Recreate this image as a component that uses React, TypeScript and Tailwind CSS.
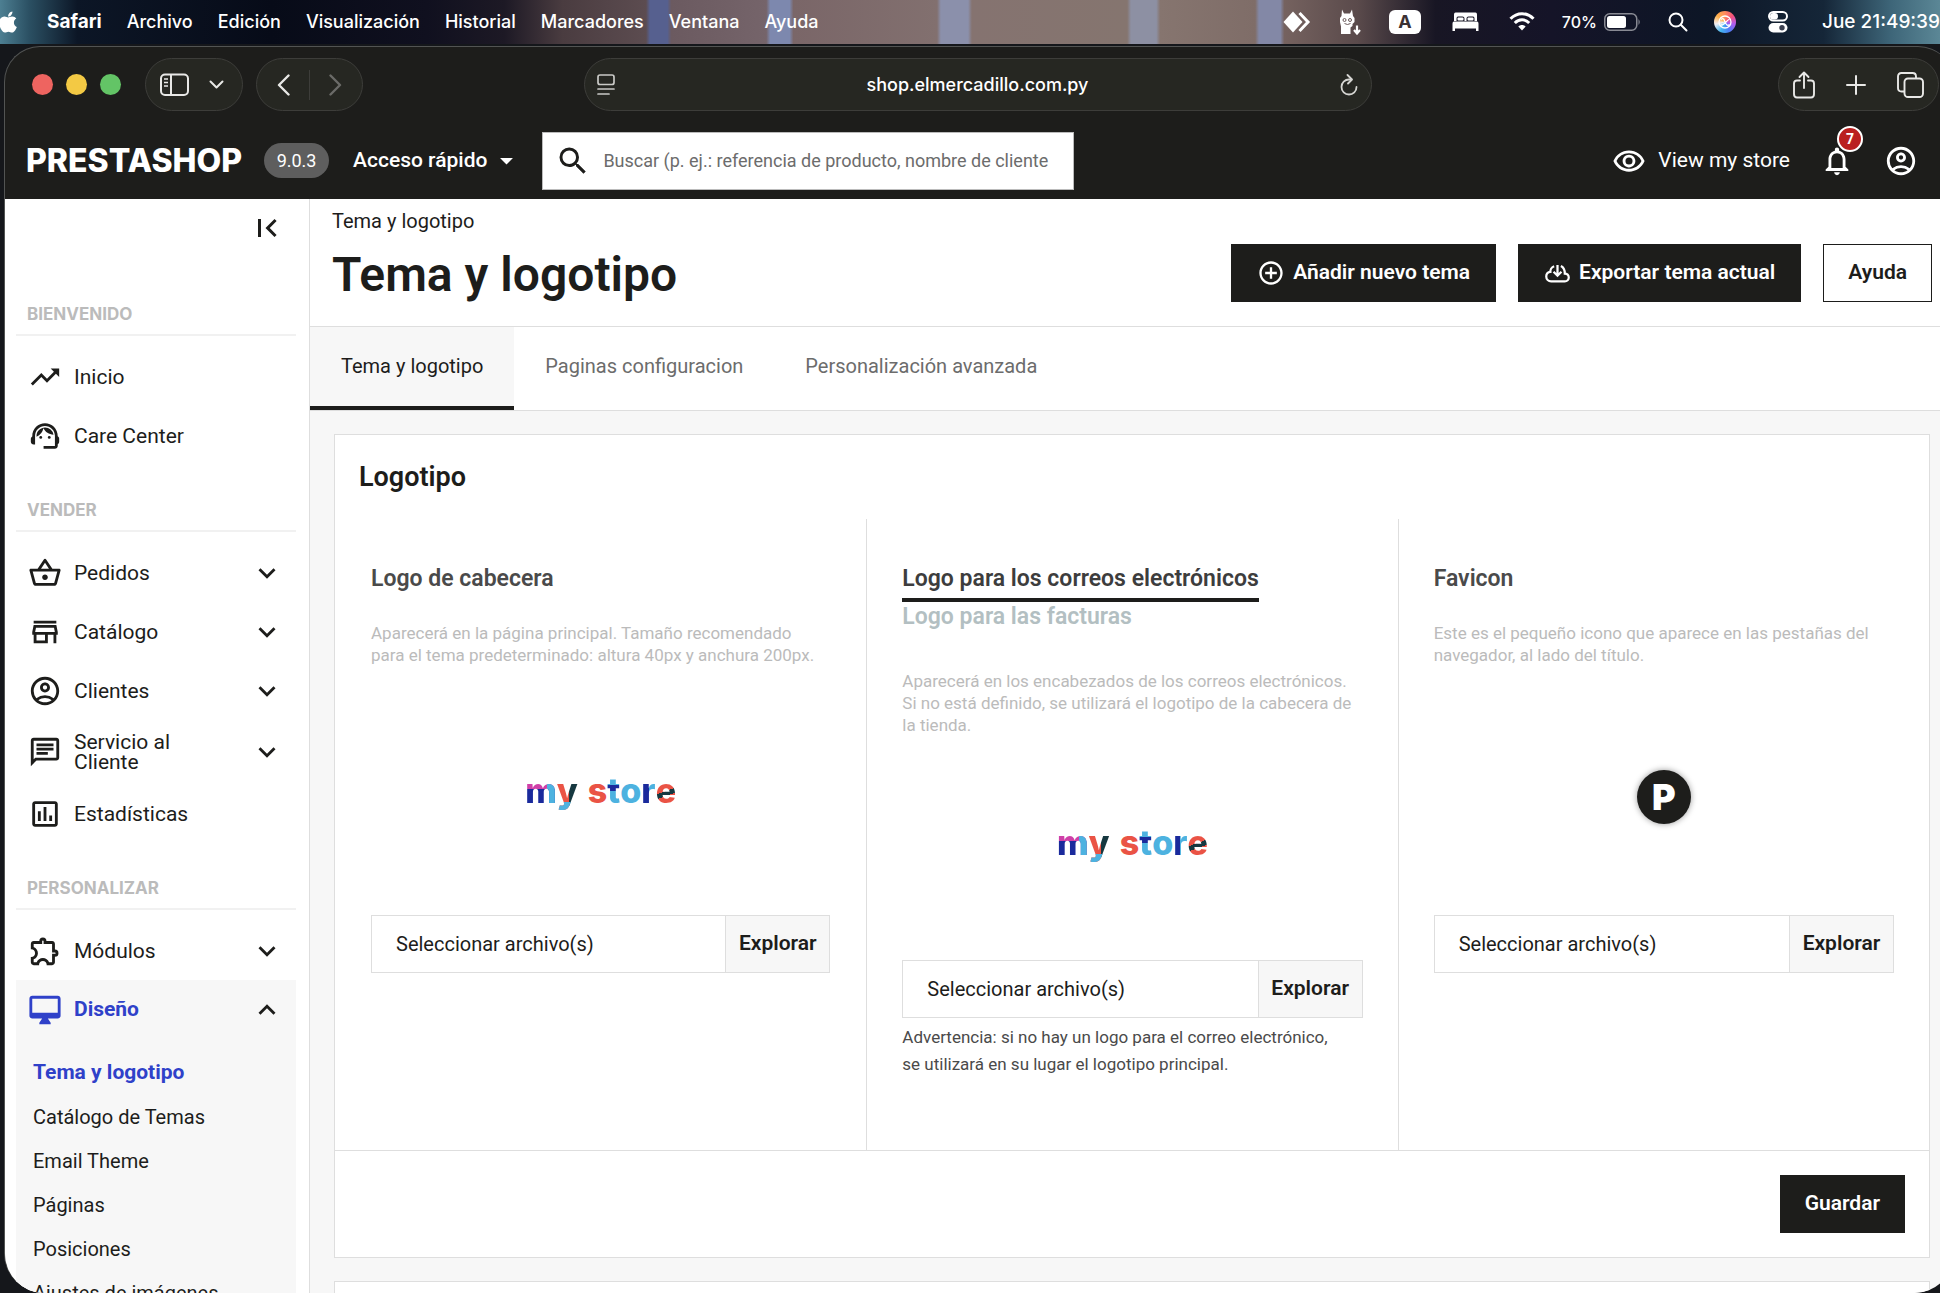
import React from 'react';
import {
  MdAddCircleOutline,
  MdArrowDropDown,
  MdExpandLess,
  MdExpandMore,
  MdFirstPage,
  MdNotificationsNone,
  MdOutlineAccountCircle,
  MdOutlineAssessment,
  MdOutlineChat,
  MdOutlineDesktopMac,
  MdOutlineExtension,
  MdOutlineRemoveRedEye,
  MdOutlineShoppingBasket,
  MdOutlineStore,
  MdSearch,
  MdSupportAgent,
  MdTrendingUp
} from 'react-icons/md';
import { FaApple } from 'react-icons/fa';

const menus = ['Archivo', 'Edición', 'Visualización', 'Historial', 'Marcadores', 'Ventana', 'Ayuda'];

const MenuBar = () => (
  <div className="flex h-11 shrink-0 items-center justify-between overflow-hidden whitespace-nowrap bg-[linear-gradient(90deg,#4d7f92_0%,#2b5063_1.5%,#0c1626_4%,#070b18_14%,#10101f_22%,#1d1925_26%,#4a3c40_29%,#5c4c50_33.3%,#56608f_33.5%,#56608f_34.4%,#6b5a60_34.6%,#75646a_39.5%,#7d88ae_39.7%,#7d88ae_40.7%,#7a6668_40.9%,#82706f_48.3%,#8b90ab_48.5%,#8b90ab_49.9%,#857370_50.1%,#85756f_58.1%,#8d90a3_58.3%,#8d90a3_59.6%,#86756f_59.8%,#7f6d68_64.7%,#8388a6_64.9%,#8388a6_66%,#75625f_66.2%,#5a4a4b_70%,#181624_74%,#151428_80%,#0d1626_88%,#152638_94%,#3e6679_97.5%,#5b8796_100%)] font-['Inter',sans-serif] text-lg text-white">
    <div className="flex items-center gap-[25px]">
      <div className="flex items-center gap-[27px]">
        <FaApple className="size-6 -ml-1" />
        <span className="text-[19px] font-bold">Safari</span>
      </div>
      {menus.map((m) => (
        <span key={m} className="font-medium">{m}</span>
      ))}
    </div>
    <div className="flex items-center">
      <svg width="28" height="24" viewBox="0 0 28 24" fill="none">
        <path d="M10 1.5L19.5 12L10 22.5L0.5 12Z" fill="currentColor" />
        <path d="M16.5 3L25 12L16.5 21" stroke="currentColor" strokeWidth="3" />
      </svg>
      <svg className="ml-7" width="22" height="26" viewBox="0 0 22 26" fill="currentColor">
        <path d="M3 0.5L5 4.500H11L13 0.5L14 7L15.500 9V13L13.500 15V17L11.500 18.500V25H2V17.500L1 13V9L2.500 7Z" />
        <path d="M18 16.500V24M15 21L18 24.500L21 21" fill="none" stroke="currentColor" strokeWidth="2.200" />
        <circle cx="5.500" cy="11" r="1.500" fill="none" stroke="#6b5a5a" strokeWidth="1" />
        <circle cx="11" cy="11" r="1.500" fill="none" stroke="#6b5a5a" strokeWidth="1" />
        <path d="M5.500 14.500Q8.500 16.500 11.500 14.500" fill="none" stroke="#6b5a5a" strokeWidth="1" />
      </svg>
      <span className="ml-7 flex h-6 w-8 items-center justify-center rounded-md bg-white text-lg font-bold text-[#3b3133]">A</span>
      <svg className="ml-[31px]" width="27" height="20" viewBox="0 0 27 20" fill="currentColor">
        <path d="M3.500 0.500H23.500Q25 0.500 25 2.500V9H22.500V6.500Q22.500 4.500 21 4.500H16.500Q14.500 4.500 14.500 6.500V9H12.500V6.500Q12.500 4.500 10.500 4.500H6Q4.500 4.500 4.500 6.500V9H2V2.500Q2 0.500 3.500 0.500Z" />
        <rect x="5.500" y="5.500" width="6" height="3" rx="1" />
        <rect x="15.500" y="5.500" width="6" height="3" rx="1" />
        <path d="M2 9.500H25Q26.500 9.500 26.500 11.500V19H24V16.500H3V19H0.500V11.500Q0.500 9.500 2 9.500Z" />
      </svg>
      <svg className="ml-[30px]" width="26" height="19" viewBox="0 0 26 19" fill="none" stroke="currentColor" strokeWidth="3">
        <path d="M1.500 6.800C8 0 18 0 24.500 6.800" />
        <path d="M5.800 11C10 6.800 16 6.800 20.200 11" />
        <path d="M13 18.500L9.300 14.500C11.500 12.500 14.500 12.500 16.700 14.500Z" fill="currentColor" stroke="none" />
      </svg>
      <span className="ml-[27px] text-base font-medium">70%</span>
      <svg className="ml-[7px]" width="37" height="18" viewBox="0 0 37 18" fill="none">
        <rect x="0.750" y="0.750" width="32" height="16.500" rx="5" stroke="#fff" strokeOpacity="0.500" strokeWidth="1.500" />
        <rect x="3" y="3" width="19" height="12" rx="2.500" fill="#fff" />
        <path d="M34.500 6Q37 9 34.500 12Z" fill="#fff" fillOpacity="0.500" />
      </svg>
      <svg className="ml-[27px]" width="20" height="20" viewBox="0 0 20 20" fill="none" stroke="currentColor" strokeWidth="2">
        <circle cx="8" cy="8" r="6.500" />
        <path d="M12.800 12.800L18.500 18.500" strokeLinecap="round" />
      </svg>
      <span className="ml-[26px] flex size-[22px] items-center justify-center rounded-full bg-[conic-gradient(#ff8a5c,#f5527a,#b05cf0,#4a7df5,#45b6f0,#f2f0f5,#ffb14a,#ff8a5c)]">
        <svg width="14" height="14" viewBox="0 0 14 14" fill="none" stroke="#fff" strokeWidth="1.300">
          <circle cx="7" cy="7" r="6" />
          <path d="M3 4.500C6 2 6.500 6 7 7S9 12 11.500 9.500M3 9.500C5 12 9.500 4 11.500 4.500" />
        </svg>
      </span>
      <svg className="ml-8" width="20" height="22" viewBox="0 0 20 22" fill="none">
        <rect x="1" y="1" width="18" height="8.500" rx="4.250" stroke="#fff" strokeWidth="2" />
        <rect x="2" y="2" width="8" height="6.500" rx="3.250" fill="#fff" />
        <rect x="0.500" y="12" width="19" height="9.500" rx="4.750" fill="#fff" />
        <circle cx="14" cy="16.750" r="2.700" fill="#3a3f4f" />
      </svg>
      <span className="ml-[34px] text-[19px] font-medium">Jue 21:49:39</span>
    </div>
  </div>
);

const Toolbar = () => (
  <div className="flex h-[75px] items-center pl-3 pr-px text-[#e8e8e6]">
    <div className="flex flex-1 items-center gap-[13px]">
      <span className="ml-[15px] size-[21px] rounded-full bg-[#ee6460]" />
      <span className="size-[21px] rounded-full bg-[#f3c944]" />
      <span className="size-[21px] rounded-full bg-[#63c466]" />
      <div className="ml-[11px] flex h-[53px] w-[98px] items-center justify-between rounded-full border border-[#3d3d3a] bg-[#262722] pl-3.5 pr-[18px]">
        <button aria-label="Barra lateral">
          <svg width="30" height="24" viewBox="0 0 30 24" fill="none" stroke="currentColor" strokeWidth="2">
            <rect x="1" y="1.500" width="27" height="20.500" rx="4" />
            <path d="M11 2V22" />
            <path d="M4 6H8M4 9.500H8M4 13H8" strokeWidth="1.500" />
          </svg>
        </button>
        <button aria-label="Grupos de pestañas">
          <svg width="15" height="9" viewBox="0 0 15 9" fill="none" stroke="currentColor" strokeWidth="2" strokeLinecap="round" strokeLinejoin="round">
            <path d="M1.500 1.500L7.500 7.500L13.500 1.500" />
          </svg>
        </button>
      </div>
      <div className="flex h-[53px] w-[107px] items-center justify-between rounded-full border border-[#3d3d3a] bg-[#262722] px-5">
        <button aria-label="Atrás">
          <svg width="13" height="22" viewBox="0 0 13 22" fill="none" stroke="currentColor" strokeWidth="2.400" strokeLinecap="round" strokeLinejoin="round">
            <path d="M11.500 1.500L2 11L11.500 20.500" />
          </svg>
        </button>
        <span className="h-[30px] w-px bg-[#3d3d3a]" />
        <button aria-label="Adelante" className="text-[#6b6b68]">
          <svg width="13" height="22" viewBox="0 0 13 22" fill="none" stroke="currentColor" strokeWidth="2.400" strokeLinecap="round" strokeLinejoin="round">
            <path d="M1.500 1.500L11 11L1.500 20.500" />
          </svg>
        </button>
      </div>
    </div>
    <div className="flex h-[53px] w-[41%] items-center justify-between rounded-full border border-[#3d3d3a] bg-[#262722] px-3 font-['Inter',sans-serif] text-lg font-medium text-white">
      <svg width="18" height="21" viewBox="0 0 18 21" fill="none" stroke="#c9c9c6" strokeWidth="1.700" strokeLinecap="round">
        <rect x="1" y="1" width="16" height="9.500" rx="2" />
        <path d="M1 15H17M1 20H12" />
      </svg>
      <span>shop.elmercadillo.com.py</span>
      <button aria-label="Recargar" className="pr-px">
        <svg width="18" height="22" viewBox="0 0 18 22" fill="none" stroke="#d5d5d2" strokeWidth="1.800" strokeLinecap="round" strokeLinejoin="round">
          <path d="M10.500 5.500H9A7.500 7.500 0 1 0 16.500 13" />
          <path d="M7.500 1L12 5.500L8 9.500" />
        </svg>
      </button>
    </div>
    <div className="flex flex-1 justify-end">
      <div className="flex h-[53px] items-center gap-[31px] rounded-full border border-[#3d3d3a] bg-[#262722] px-3.5">
        <button aria-label="Compartir">
          <svg width="22" height="28" viewBox="0 0 22 28" fill="none" stroke="currentColor" strokeWidth="1.900" strokeLinecap="round" strokeLinejoin="round">
            <path d="M7 9.500H4Q1 9.500 1 12.500V23Q1 26.500 4 26.500H18Q21 26.500 21 23V12.500Q21 9.500 18 9.500H15" />
            <path d="M11 17V1.500M6.500 6L11 1.500L15.500 6" />
          </svg>
        </button>
        <button aria-label="Nueva pestaña">
          <svg width="20" height="20" viewBox="0 0 20 20" fill="none" stroke="currentColor" strokeWidth="2" strokeLinecap="round">
            <path d="M10 1V19M1 10H19" />
          </svg>
        </button>
        <button aria-label="Vista de pestañas">
          <svg width="27" height="26" viewBox="0 0 27 26" fill="none" stroke="currentColor" strokeWidth="1.900">
            <rect x="7.500" y="6.500" width="18.500" height="18.500" rx="3.500" />
            <path d="M7.500 19.500H4.500Q1 19.500 1 16V4.500Q1 1 4.500 1H15.500Q19 1 19 4.500V6.500" />
          </svg>
        </button>
      </div>
    </div>
  </div>
);

const ShopHeader = () => (
  <div className="flex h-[77px] items-center pl-[21px] pr-[22px] text-[21px] text-white">
    <a href="#inicio" className="font-['Inter',sans-serif] text-[32px] font-extrabold">PRESTASHOP</a>
    <span className="ml-[22px] flex h-[35px] w-[65px] items-center justify-center rounded-full bg-[#5e5e5e] text-lg">9.0.3</span>
    <button className="ml-6 flex items-center gap-1 font-medium">
      Acceso rápido
      <MdArrowDropDown className="size-[31px]" />
    </button>
    <label className="ml-5 flex h-[58px] w-[532px] items-center border border-[#bbb] bg-white pl-3 pr-6 text-[#1d1d1b]">
      <MdSearch className="size-9 shrink-0" />
      <input
        type="text"
        aria-label="Buscar"
        placeholder="Buscar (p. ej.: referencia de producto, nombre de cliente…)"
        className="ml-3 min-w-0 flex-1 text-lg placeholder:text-[#6c6c6c]"
      />
    </label>
    <a href="#tienda" className="ml-auto flex items-center gap-3">
      <MdOutlineRemoveRedEye className="size-[34px]" />
      View my store
    </a>
    <button aria-label="Notificaciones" className="relative ml-[30px]">
      <MdNotificationsNone className="size-[34px]" />
      <span className="absolute -top-[18px] left-[17px] flex size-[26px] items-center justify-center rounded-full border-2 border-white bg-[#ba1f1f] text-sm font-bold">7</span>
    </button>
    <button aria-label="Cuenta" className="ml-[30px]">
      <MdOutlineAccountCircle className="size-[34px]" />
    </button>
  </div>
);

const sections = [
  {
    title: 'BIENVENIDO',
    items: [
      { label: 'Inicio', Icon: MdTrendingUp, expandable: false },
      { label: 'Care Center', Icon: MdSupportAgent, expandable: false }
    ]
  },
  {
    title: 'VENDER',
    items: [
      { label: 'Pedidos', Icon: MdOutlineShoppingBasket, expandable: true },
      { label: 'Catálogo', Icon: MdOutlineStore, expandable: true },
      { label: 'Clientes', Icon: MdOutlineAccountCircle, expandable: true },
      { label: 'Servicio al Cliente', Icon: MdOutlineChat, expandable: true },
      { label: 'Estadísticas', Icon: MdOutlineAssessment, expandable: false }
    ]
  },
  {
    title: 'PERSONALIZAR',
    items: [{ label: 'Módulos', Icon: MdOutlineExtension, expandable: true }]
  }
];

const designLinks = ['Tema y logotipo', 'Catálogo de Temas', 'Email Theme', 'Páginas', 'Posiciones', 'Ajustes de imágenes'];

const Sidebar = () => (
  <nav className="w-[305px] shrink-0 border-r border-[#dedede] bg-white pl-[11px] pr-[13px] text-[21px]">
    <div className="flex h-[70px] justify-end pr-[11px] pt-[11px]">
      <button aria-label="Contraer menú" className="h-9">
        <MdFirstPage className="size-9" />
      </button>
    </div>
    {sections.map((section) => (
      <div key={section.title}>
        <h2 className="mb-[11px] flex h-[67px] items-end border-b-2 border-[#f1f1f1] pb-2.5 pl-[11px] font-['Inter',sans-serif] text-[17px] leading-5 font-bold text-[#bbb]">{section.title}</h2>
        {section.items.map(({ label, Icon, expandable }) => (
          <a key={label} href="#menu" className="flex min-h-[59px] items-center px-3 py-3 leading-5">
            <Icon className="size-[34px] shrink-0" />
            <span className="ml-3 flex-1 pr-12">{label}</span>
            {expandable && <MdExpandMore className="size-[34px] shrink-0" />}
          </a>
        ))}
      </div>
    ))}
    <div className="bg-[#f7f7f7]">
      <a href="#menu" className="flex h-[59px] items-center px-3 font-bold text-[#2f41c9]">
        <MdOutlineDesktopMac className="size-[34px]" />
        <span className="ml-3 flex-1">Diseño</span>
        <MdExpandLess className="size-[34px] text-[#1d1d1b]" />
      </a>
      <ul className="pt-3 text-xl">
        {designLinks.map((label, i) => (
          <li key={label}>
            <a href="#diseno" className={i === 0 ? 'flex h-11 items-center pl-[17px] text-[21px] font-bold text-[#2f41c9]' : 'flex h-11 items-center pl-[17px]'}>
              {label}
            </a>
          </li>
        ))}
      </ul>
    </div>
  </nav>
);

const StoreLogo = () => (
  <div aria-label="my store" className="flex font-['Inter',sans-serif] text-[34px] leading-[44px] font-extrabold text-[#4db2e0]">
    <span className="bg-[linear-gradient(90deg,transparent_68%,#4db2e0_68%),linear-gradient(180deg,#cf3fa8_45%,#1a2a9c_45%)] bg-clip-text text-transparent">m</span>
    <span className="bg-[linear-gradient(180deg,transparent_74%,#4db2e0_74%),linear-gradient(90deg,#ea5345_58%,#163840_58%)] bg-clip-text text-transparent">y</span>
    <span className="ml-2.5 text-[#ea5345]">s</span>
    <span className="bg-[linear-gradient(180deg,#4db2e0_36%,#1a2a9c_36%,#1a2a9c_50%,#4db2e0_50%)] bg-clip-text text-transparent">t</span>
    <span>o</span>
    <span className="bg-[linear-gradient(90deg,#1a2a9c_52%,#4db2e0_52%)] bg-clip-text text-transparent">r</span>
    <span className="bg-[linear-gradient(160deg,#ea5345_50%,#163840_50%,#163840_60%,#ea5345_60%)] bg-clip-text text-transparent">e</span>
  </div>
);

const FilePicker = ({ id }: { id: string }) => (
  <label htmlFor={id} className="flex h-[58px] border border-[#dedede]">
    <input id={id} type="file" className="sr-only" />
    <span className="flex flex-1 items-center pl-6 text-xl">Seleccionar archivo(s)</span>
    <span className="flex w-[104px] items-center justify-center border-l border-[#dedede] bg-[#f7f7f7] text-[21px] font-semibold">Explorar</span>
  </label>
);

const App: React.FC = () => {
  return (
    <div className="flex h-screen flex-col overflow-hidden bg-[#15171b] font-['Roboto',sans-serif] text-[#1d1d1b]">
      <MenuBar />
      <div className="mt-0.5 ml-1 -mr-3.5 flex min-h-0 flex-1 flex-col overflow-hidden rounded-t-[36px] rounded-b-[40px] border-t border-l border-[#525453] bg-[#1d1d1b] pr-3.5">
        <Toolbar />
        <ShopHeader />
        <div className="flex min-h-0 flex-1 bg-[#f7f7f7]">
          <Sidebar />
          <main className="min-w-0 flex-1">
            <header className="h-32 border-b border-[#dedede] bg-white pt-[7px] pl-[22px] pr-2">
              <p className="text-xl leading-[30px]">Tema y logotipo</p>
              <div className="mt-2 flex h-[58px] items-center justify-between">
                <h1 className="pt-1 text-5xl font-semibold">Tema y logotipo</h1>
                <div className="flex gap-[22px] text-[21px] font-semibold">
                  <button className="flex h-[58px] items-center gap-2 bg-[#1d1d1b] px-[26px] text-white">
                    <MdAddCircleOutline className="size-7" />
                    Añadir nuevo tema
                  </button>
                  <button className="flex h-[58px] items-center gap-2 bg-[#1d1d1b] px-[26px] text-white">
                    <svg width="27" height="27" viewBox="0 0 24 24" fill="none" stroke="currentColor" strokeWidth="2">
                      <path d="M9 5.500C6.500 6.500 5.500 9 5.700 10.500C3.300 10.700 2 12.400 2 14.700C2 17.200 4 19 6.300 19H18.500C20.500 19 22 17.500 22 15.500C22 13.500 20.500 12 18.500 12C18.500 9 17.500 6.500 15 5.300" />
                      <path d="M12 4.500V13.500M8.500 10.500L12 14L15.500 10.500" />
                    </svg>
                    Exportar tema actual
                  </button>
                  <button className="flex h-[58px] items-center border border-[#1d1d1b] bg-white px-6">Ayuda</button>
                </div>
              </div>
            </header>
            <div className="flex h-[84px] border-b border-[#dedede] bg-white text-xl text-[#6c6c6c]">
              <a href="#tema" className="flex items-center border-b-4 border-[#1d1d1b] bg-[#f7f7f7] px-[31px] pb-0.5 text-[#1d1d1b]">Tema y logotipo</a>
              <a href="#paginas" className="flex items-center border-b-4 border-transparent px-[31px] pb-0.5">Paginas configuracion</a>
              <a href="#avanzada" className="flex items-center border-b-4 border-transparent px-[31px] pb-0.5">Personalización avanzada</a>
            </div>
            <div className="flex flex-col gap-[23px] pt-[23px] pl-6 pr-2.5">
              <section className="border border-[#dedede] bg-white">
                <h2 className="flex h-[84px] items-center pl-6 text-[27px] font-semibold">Logotipo</h2>
                <div className="grid min-h-[631px] grid-cols-3">
                  <div className="px-9 pt-[45px]">
                    <h3 className="text-[23px] leading-[30px] font-semibold text-[#4a4a4a]">Logo de cabecera</h3>
                    <p className="mt-7 pr-1 text-[17px] leading-[22px] text-[#bbb]">
                      Aparecerá en la página principal. Tamaño recomendado para el tema predeterminado: altura 40px y anchura 200px.
                    </p>
                    <div className="flex h-[249px] items-center justify-center">
                      <StoreLogo />
                    </div>
                    <FilePicker id="header-logo" />
                  </div>
                  <div className="border-l border-[#dedede] px-[35px] pt-[45px]">
                    <div className="flex flex-col items-start text-[23px] leading-[30px] font-semibold">
                      <button className="border-b-4 border-[#1d1d1b] pb-1 text-[#3d3d3d]">Logo para los correos electrónicos</button>
                      <button className="text-[#b3bfc2]">Logo para las facturas</button>
                    </div>
                    <p className="mt-[38px] text-[17px] leading-[22px] text-[#bbb]">
                      Aparecerá en los encabezados de los correos electrónicos. Si no está definido, se utilizará el logotipo de la cabecera de la tienda.
                    </p>
                    <div className="flex h-[224px] items-center justify-center pb-2.5">
                      <StoreLogo />
                    </div>
                    <FilePicker id="mail-logo" />
                    <p className="mt-1.5 pr-5 text-[17px] leading-[27px] text-[#4a4a4a]">
                      Advertencia: si no hay un logo para el correo electrónico, se utilizará en su lugar el logotipo principal.
                    </p>
                  </div>
                  <div className="border-l border-[#dedede] px-[35px] pt-[45px]">
                    <h3 className="text-[23px] leading-[30px] font-semibold text-[#4a4a4a]">Favicon</h3>
                    <p className="mt-7 text-[17px] leading-[22px] text-[#bbb]">
                      Este es el pequeño icono que aparece en las pestañas del navegador, al lado del título.
                    </p>
                    <div className="flex h-[249px] items-center justify-center pt-3">
                      <span className="flex size-[54px] items-center justify-center rounded-full bg-[#1d1d1b] font-['Inter',sans-serif] text-4xl font-black text-white shadow-[0_0_6px_rgba(0,0,0,0.4)]">P</span>
                    </div>
                    <FilePicker id="favicon" />
                  </div>
                </div>
                <div className="flex justify-end border-t border-[#dedede] px-6 py-6">
                  <button className="h-[58px] bg-[#1d1d1b] px-[25px] text-[21px] font-semibold text-white">Guardar</button>
                </div>
              </section>
              <section className="h-40 border border-[#dedede] bg-white" />
            </div>
          </main>
        </div>
      </div>
    </div>
  );
};

export default App;
